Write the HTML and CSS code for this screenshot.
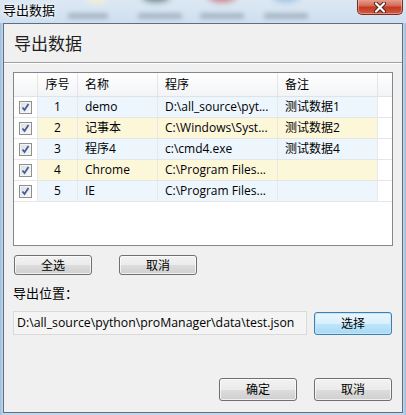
FILE: index.html
```html
<!DOCTYPE html>
<html lang="zh">
<head>
<meta charset="utf-8">
<title>导出数据</title>
<link rel="stylesheet" href="styles.css">
</head>
<body>
<div class="window">
  <div class="titlebar">
    <div class="glass">
      <span class="blob b1"></span><span class="blob b2"></span><span class="blob b3"></span><span class="blob b4"></span>
      <span class="blob l1"></span><span class="blob l2"></span><span class="blob l3"></span><span class="blob l4"></span>
    </div>
    <span class="title">导出数据</span>
    <div class="close">
      <svg width="14" height="11" viewBox="0 0 14 11">
        <path d="M3 1.5 L11 9.5 M11 1.5 L3 9.5" stroke="#4a2019" stroke-width="4" stroke-linecap="round"/>
        <path d="M3 1.5 L11 9.5 M11 1.5 L3 9.5" stroke="#ffffff" stroke-width="2.2" stroke-linecap="round"/>
      </svg>
    </div>
  </div>
  <div class="client">
    <div class="header">导出数据</div>
    <div class="content">
      <div class="grid">
        <div class="row head">
          <div class="c c0"></div>
          <div class="c c1 center">序号</div>
          <div class="c c2">名称</div>
          <div class="c c3">程序</div>
          <div class="c c4">备注</div>
          <div class="c c5"></div>
        </div>
        <div class="row blue">
          <div class="c c0"><span class="cb"></span></div>
          <div class="c c1 center">1</div>
          <div class="c c2">demo</div>
          <div class="c c3">D:\all_source\pyt...</div>
          <div class="c c4">测试数据1</div>
          <div class="c c5"></div>
        </div>
        <div class="row yellow">
          <div class="c c0"><span class="cb"></span></div>
          <div class="c c1 center">2</div>
          <div class="c c2">记事本</div>
          <div class="c c3">C:\Windows\Syst...</div>
          <div class="c c4">测试数据2</div>
          <div class="c c5"></div>
        </div>
        <div class="row blue">
          <div class="c c0"><span class="cb"></span></div>
          <div class="c c1 center">3</div>
          <div class="c c2">程序4</div>
          <div class="c c3">c:\cmd4.exe</div>
          <div class="c c4">测试数据4</div>
          <div class="c c5"></div>
        </div>
        <div class="row yellow">
          <div class="c c0"><span class="cb"></span></div>
          <div class="c c1 center">4</div>
          <div class="c c2">Chrome</div>
          <div class="c c3">C:\Program Files...</div>
          <div class="c c4"></div>
          <div class="c c5"></div>
        </div>
        <div class="row blue">
          <div class="c c0"><span class="cb"></span></div>
          <div class="c c1 center">5</div>
          <div class="c c2">IE</div>
          <div class="c c3">C:\Program Files...</div>
          <div class="c c4"></div>
          <div class="c c5"></div>
        </div>
      </div>
      <div class="btnrow">
        <button class="btn">全选</button>
        <button class="btn">取消</button>
      </div>
      <div class="label">导出位置：</div>
      <div class="pathrow">
        <div class="path">D:\all_source\python\proManager\data\test.json</div>
        <button class="btn default">选择</button>
      </div>
      <div class="spacer"></div>
      <div class="footer">
        <button class="btn tall">确定</button>
        <button class="btn tall">取消</button>
      </div>
    </div>
  </div>
</div>
</body>
</html>
```

FILE: styles.css
```css
* { box-sizing: border-box; }
html, body { margin: 0; padding: 0; }
body {
  width: 406px;
  height: 415px;
  overflow: hidden;
  font-family: "Open Sans", "Noto Sans CJK SC", sans-serif;
  font-size: 12px;
  color: #000;
  background: #b9d1ea;
}
.window {
  width: 406px;
  height: 415px;
  display: flex;
  flex-direction: column;
  background: linear-gradient(to right, #9fbddc 0, #c3d7ec 3px, #c3d7ec 403px, #9fbddc 406px);
  padding: 0 3px 2px 3px;
}
.titlebar {
  position: relative;
  height: 23px;
  margin: 0 -3px;
  flex: none;
  overflow: hidden;
  background: linear-gradient(to bottom, #dce8f4, #cfdfef);
}
.glass { position: absolute; inset: 0; }
.blob { position: absolute; border-radius: 50%; filter: blur(3px); }
.b1 { left: 86px; top: -8px; width: 22px; height: 12px; background: #f2eed8; }
.b2 { left: 142px; top: -10px; width: 28px; height: 12px; background: #6a8088; }
.b3 { left: 208px; top: -10px; width: 28px; height: 12px; background: #cc7a7a; }
.b4 { left: 272px; top: -10px; width: 28px; height: 12px; background: #9dbfe0; }
.l1, .l2, .l3, .l4 { top: 13px; height: 6px; border-radius: 2px; background: #aab8c6; filter: blur(2px); }
.l1 { left: 68px; width: 40px; }
.l2 { left: 138px; width: 44px; }
.l3 { left: 200px; width: 44px; }
.l4 { left: 264px; width: 44px; }
.title {
  position: absolute;
  left: 3px;
  top: 2px;
  font-size: 13px;
  line-height: 17px;
  color: #000;
  text-shadow: 0 0 6px #fff, 0 0 3px #fff;
}
.close {
  position: absolute;
  left: 357px;
  top: -1px;
  width: 46px;
  height: 16px;
  border: 1px solid #7c2b23;
  border-top: none;
  border-radius: 0 0 5px 5px;
  background: linear-gradient(to bottom, #e9a593 0%, #d46a55 45%, #c03a24 55%, #d8593d 100%);
  box-shadow: inset 0 0 0 1px rgba(255,255,255,0.35);
  display: flex;
  align-items: center;
  justify-content: center;
}
.close svg { display: block; margin-top: 1px; }
.client {
  flex: 1;
  display: flex;
  flex-direction: column;
  background: #f0f0f0;
  border: 1px solid #5e6f83;
}
.header {
  height: 39px;
  flex: none;
  padding: 10px 0 0 10px;
  font-size: 17px;
  line-height: 20px;
  color: #1e1e1e;
  border-bottom: 1px solid #a0a0a0;
  box-shadow: 0 1px 0 #fff;
}
.content {
  flex: 1;
  display: flex;
  flex-direction: column;
  padding: 9px 9px 11px 9px;
}
.grid {
  height: 174px;
  flex: none;
  border: 1px solid #828790;
  background: #fff;
  display: flex;
  flex-direction: column;
}
.row { display: flex; height: 21px; flex: none; border-bottom: 1px solid #e6e6e6; }
.row.head {
  height: 24px;
  background: linear-gradient(to bottom, #ffffff, #f3f4f6);
  border-bottom: 1px solid #dfe2e6;
}
.c {
  border-right: 1px solid #e8e8e8;
  padding-left: 7px;
  white-space: nowrap;
  overflow: hidden;
  line-height: 20px;
  color: #000;
}
.head .c { line-height: 23px; border-right-color: #e3e5e8; }
.c.center { text-align: center; padding-left: 0; }
.c0 { width: 24px; padding-left: 0; display: flex; align-items: center; justify-content: center; background: #fff; }
.head .c0 { background: transparent; }
.c1 { width: 40px; }
.c2 { width: 80px; }
.c3 { width: 120px; }
.c4 { width: 100px; }
.c5 { flex: 1; border-right: none; background: #fff; }
.head .c5 { background: transparent; }
.blue .c1, .blue .c2, .blue .c3, .blue .c4 { background: #edf5fd; }
.yellow .c1, .yellow .c2, .yellow .c3, .yellow .c4 { background: #fdf7da; }
.cb {
  width: 13px;
  height: 13px;
  border: 1px solid #8e8f8f;
  background:
    url("data:image/svg+xml,%3Csvg xmlns='http://www.w3.org/2000/svg' width='11' height='11'%3E%3Cpath d='M2.5 5.5 L4.5 8 L8.5 2' fill='none' stroke='%23435c9c' stroke-width='1.8'/%3E%3C/svg%3E") center/11px 11px no-repeat,
    linear-gradient(135deg, #dcdcdc, #fafafa);
  box-shadow: inset 0 0 0 1px #f4f4f4;
}
.btnrow {
  display: flex;
  gap: 27px;
  margin-top: 9px;
  padding-left: 1px;
}
.btn {
  width: 78px;
  height: 20px;
  padding: 0;
  font-family: "Open Sans", "Noto Sans CJK SC", sans-serif;
  font-size: 12px;
  line-height: 17px;
  color: #000;
  border: 1px solid #707070;
  border-radius: 3px;
  background: linear-gradient(to bottom, #f2f2f2 0%, #ebebeb 50%, #dddddd 51%, #cfcfcf 100%);
  box-shadow: inset 0 0 0 1px rgba(255,255,255,0.7);
}
.btn.default {
  height: 23px;
  border-color: #3c7fb1;
  background: linear-gradient(to bottom, #eaf6fd 0%, #d9f0fc 50%, #bee6fd 51%, #a7d9f5 100%);
  box-shadow: inset 0 0 0 1px #c6e6f8;
  margin-top: 1px;
}
.btn.tall { height: 23px; }
.label {
  margin-top: 10px;
  font-size: 13px;
  line-height: 17px;
  color: #000;
}
.pathrow {
  display: flex;
  gap: 7px;
  margin-top: 9px;
  align-items: flex-start;
}
.path {
  width: 294px;
  height: 24px;
  border: 1px solid #dadada;
  background: #f4f4f4;
  padding-left: 3px;
  font-size: 12.3px;
  line-height: 22px;
  color: #000;
  white-space: nowrap;
  overflow: hidden;
}
.spacer { flex: 1; }
.footer {
  display: flex;
  justify-content: flex-end;
  gap: 17px;
  padding-right: 1px;
}
```
